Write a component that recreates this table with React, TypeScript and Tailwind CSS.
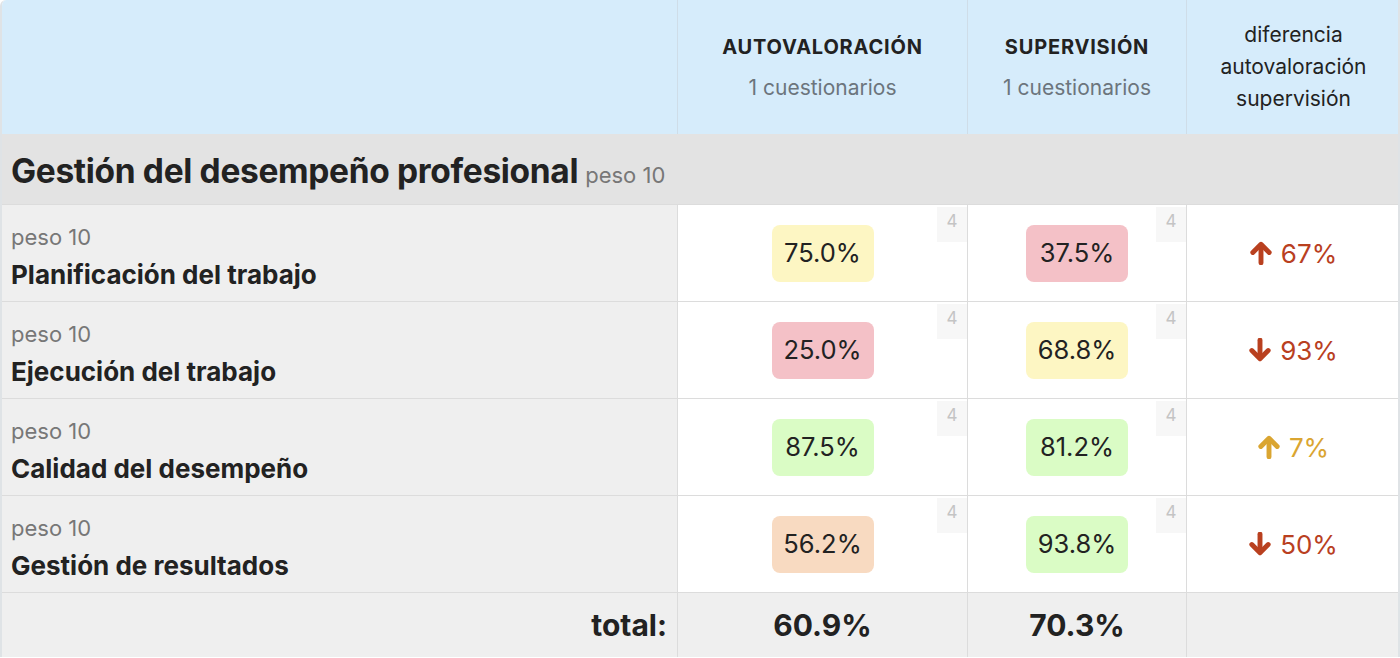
const rows = [
  { name: 'Planificación del trabajo', auto: '75.0%', autoBg: 'bg-[#fdf6c3]', sup: '37.5%', supBg: 'bg-[#f4c1c7]', up: true, diff: '67%', color: 'text-[#b9401f]' },
  { name: 'Ejecución del trabajo', auto: '25.0%', autoBg: 'bg-[#f4c1c7]', sup: '68.8%', supBg: 'bg-[#fdf6c3]', up: false, diff: '93%', color: 'text-[#b9401f]' },
  { name: 'Calidad del desempeño', auto: '87.5%', autoBg: 'bg-[#dafcc5]', sup: '81.2%', supBg: 'bg-[#dafcc5]', up: true, diff: '7%', color: 'text-[#daa531]' },
  { name: 'Gestión de resultados', auto: '56.2%', autoBg: 'bg-[#f8dac1]', sup: '93.8%', supBg: 'bg-[#dafcc5]', up: false, diff: '50%', color: 'text-[#b9401f]' },
]

function Arrow({ up }: { up: boolean }) {
  return (
    <svg width="22" height="24" viewBox="2 1 20 22" fill="none" stroke="currentColor" strokeWidth="4.5" strokeLinecap="round" strokeLinejoin="round" className={up ? '' : 'rotate-180'}>
      <path d="M12 21V5" />
      <path d="M4.5 11.5L12 4l7.5 7.5" />
    </svg>
  )
}

function Score({ value, bg }: { value: string; bg: string }) {
  return (
    <div className="relative h-full flex items-center justify-center">
      <span className={`${bg} rounded-lg h-[57px] w-[102px] flex items-center justify-center text-[25.5px] text-[#222]`}>{value}</span>
      <span className="absolute top-[2px] right-0 w-[30px] h-[35px] bg-[#f7f7f7] text-[#c4c4c4] text-[17px] flex justify-center pt-[6px] leading-none">4</span>
    </div>
  )
}

export default function App() {
  return (
    <div className="w-[1400px] h-[658px] overflow-hidden bg-white" style={{ fontFamily: 'Inter, "Liberation Sans", sans-serif' }}>
      <div className="grid grid-cols-[676px_290px_219px_213px] border-l-2 border-r-2 border-[#dfe3e6] rounded-tl-md overflow-hidden">
        {/* header */}
        <div className="h-[134px] bg-[#d6ecfb] border-r border-[#cfdde8]"></div>
        <div className="h-[134px] bg-[#d6ecfb] border-r border-[#cfdde8] flex flex-col items-center pt-[35px]">
          <div className="text-[20px] font-bold tracking-[0.04em] text-[#222] leading-6">AUTOVALORACIÓN</div>
          <div className="text-[21px] text-[#6c757d] mt-[17px] leading-6">1 cuestionarios</div>
        </div>
        <div className="h-[134px] bg-[#d6ecfb] border-r border-[#cfdde8] flex flex-col items-center pt-[35px]">
          <div className="text-[20px] font-bold tracking-[0.04em] text-[#222] leading-6">SUPERVISIÓN</div>
          <div className="text-[21px] text-[#6c757d] mt-[17px] leading-6">1 cuestionarios</div>
        </div>
        <div className="h-[134px] bg-[#d6ecfb] flex flex-col items-center justify-center text-[21px] leading-[32px] text-[#222] text-center">
          <div>diferencia</div>
          <div>autovaloración</div>
          <div>supervisión</div>
        </div>

        {/* section */}
        <div className="col-span-4 h-[71px] bg-[#e3e3e3] flex items-center pl-[9px] pt-[4px] border-b border-[#dcdcdc]">
          <span className="text-[33.5px] font-bold text-[#222] tracking-[-0.01em]">Gestión del desempeño profesional</span>
          <span className="text-[22px] text-[#777] ml-[7px] mt-[8px]">peso 10</span>
        </div>

        {rows.map((r) => (
          <div key={r.name} className="contents">
            <div className="h-[97px] bg-[#efefef] border-r border-b border-[#dcdcdc] pl-[9px] pt-[20px]">
              <div className="text-[22px] text-[#777] leading-6">peso 10</div>
              <div className="text-[26px] font-bold text-[#222] mt-[12px] leading-7">{r.name}</div>
            </div>
            <div className="h-[97px] border-r border-b border-[#dcdcdc]">
              <Score value={r.auto} bg={r.autoBg} />
            </div>
            <div className="h-[97px] border-r border-b border-[#dcdcdc]">
              <Score value={r.sup} bg={r.supBg} />
            </div>
            <div className={`h-[97px] border-b border-[#dcdcdc] flex items-center justify-center gap-[9px] text-[26px] ${r.color}`}>
              <Arrow up={r.up} />
              <span>{r.diff}</span>
            </div>
          </div>
        ))}

        {/* total */}
        <div className="h-[64px] bg-[#efefef] border-r border-[#dcdcdc] flex items-center justify-end pr-[10px] text-[30px] font-bold text-[#222]">total:</div>
        <div className="h-[64px] bg-[#efefef] border-r border-[#dcdcdc] flex items-center justify-center text-[30px] font-bold text-[#222]">60.9%</div>
        <div className="h-[64px] bg-[#efefef] border-r border-[#dcdcdc] flex items-center justify-center text-[30px] font-bold text-[#222]">70.3%</div>
        <div className="h-[64px] bg-[#efefef]"></div>
      </div>
    </div>
  )
}
